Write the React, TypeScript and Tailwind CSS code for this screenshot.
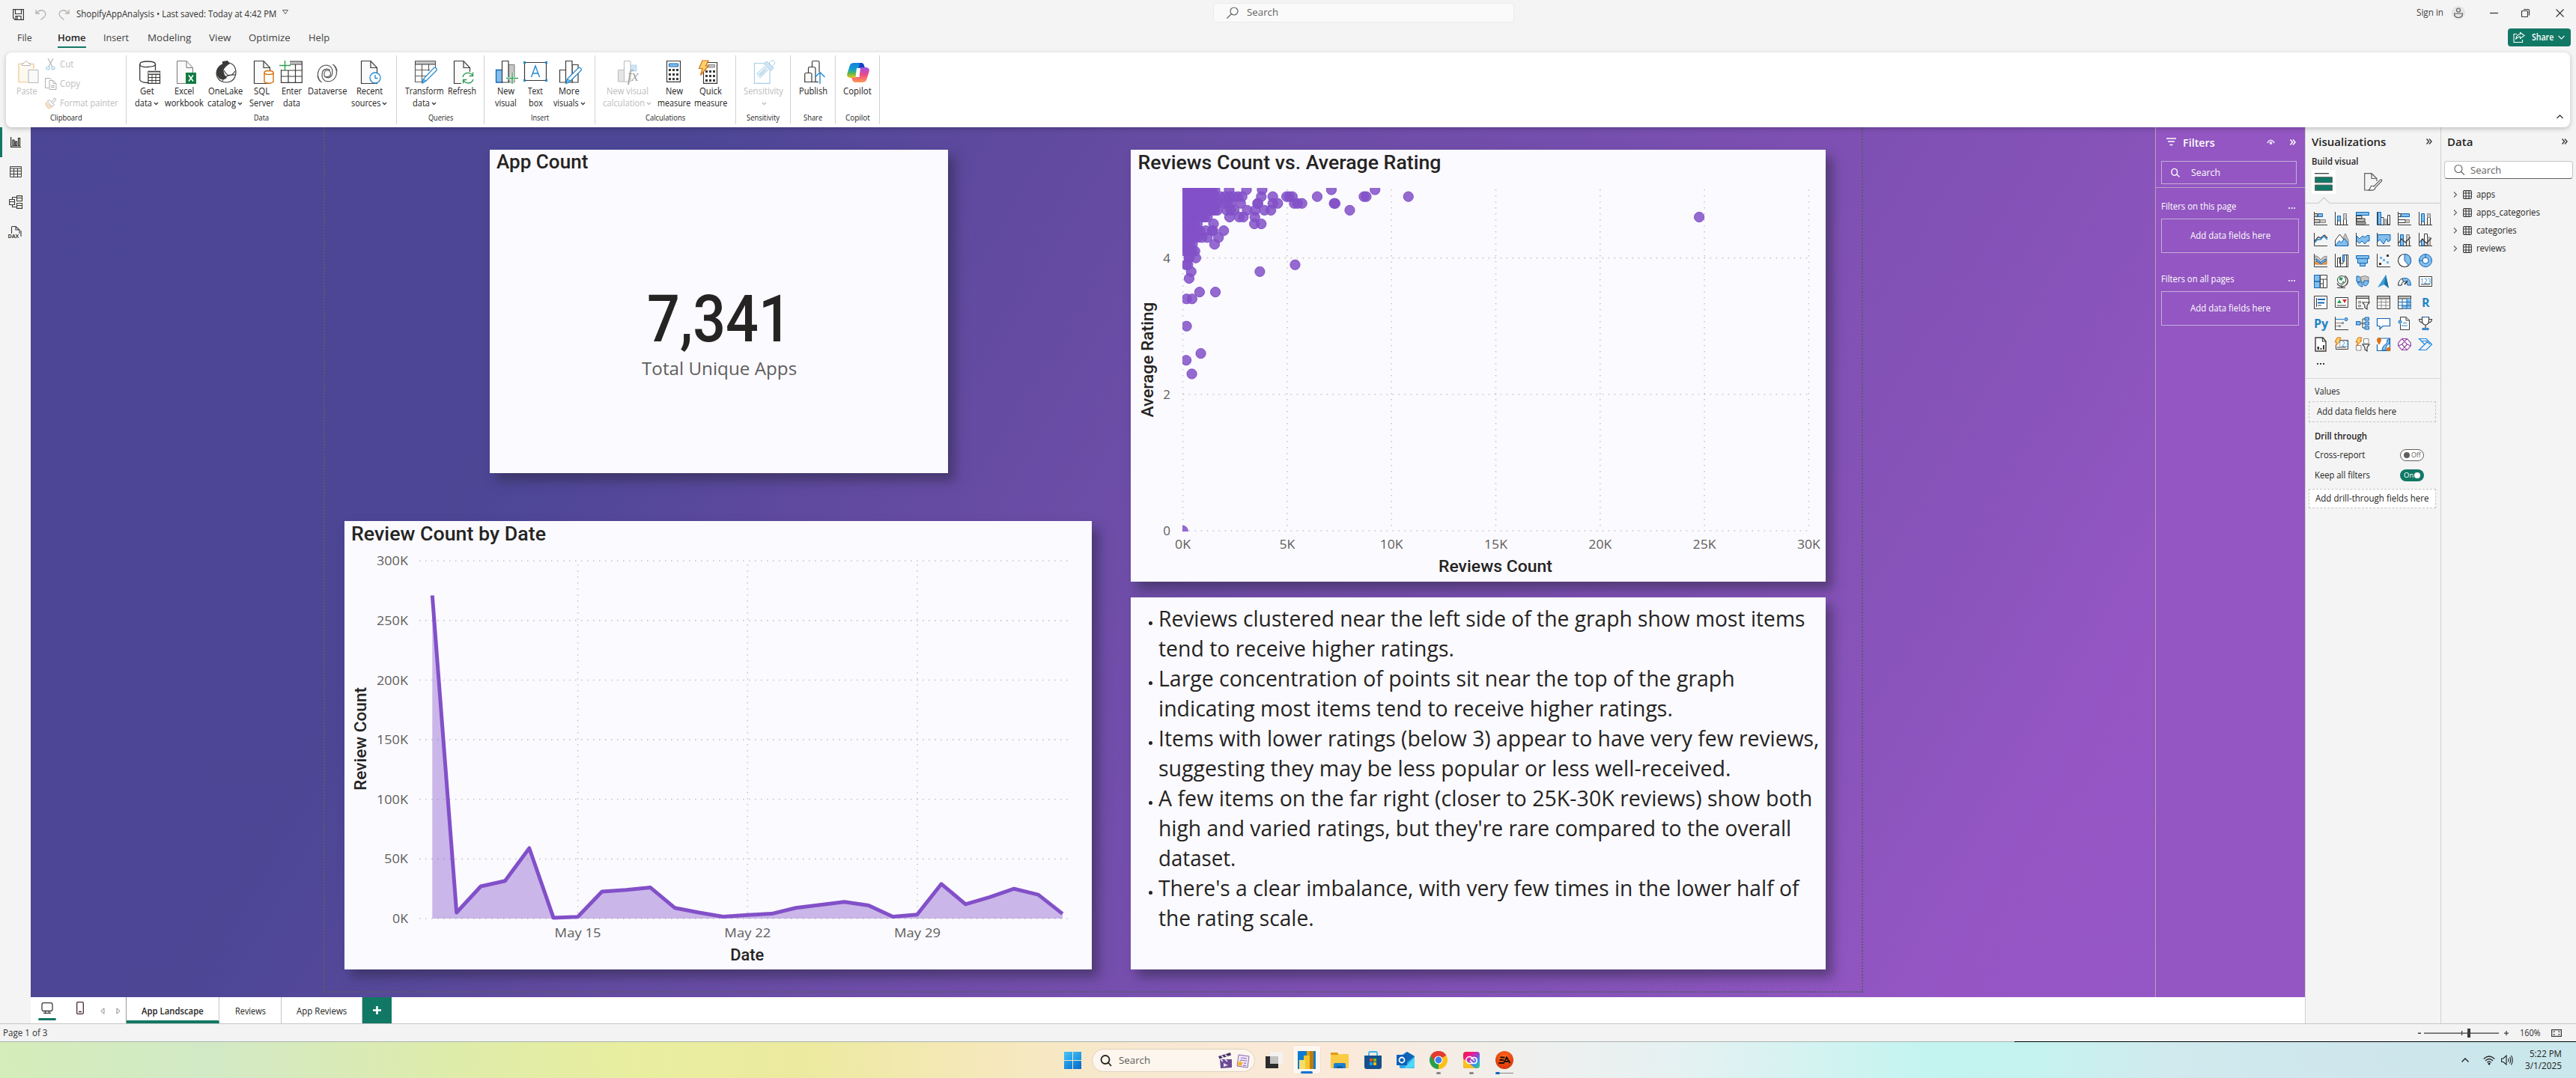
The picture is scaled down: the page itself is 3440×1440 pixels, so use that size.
import { useLayoutEffect, useRef, useState, type ReactNode } from "react";

/* ---------- text helpers ---------- */

function Fit({ w, children, className = "" }: { w: number; children: ReactNode; className?: string }) {
  const ref = useRef<HTMLSpanElement>(null);
  const [scale, setScale] = useState(1);
  useLayoutEffect(() => {
    if (ref.current && ref.current.offsetWidth) setScale(w / ref.current.offsetWidth);
  }, [w]);
  return (
    <span className={"inline-block shrink-0 text-left " + className} style={{ width: w }}>
      <span ref={ref} className="inline-block origin-left whitespace-nowrap" style={{ transform: `scaleX(${scale})` }}>
        {children}
      </span>
    </span>
  );
}

type Part = [d: string, fill?: string, stroke?: string, width?: number];

function Ico({ parts, w = 18, h = 18, className = "", children }: { parts: Part[]; w?: number; h?: number; className?: string; children?: ReactNode }) {
  return (
    <svg width={w} height={h} viewBox={`0 0 ${w} ${h}`} className={"block shrink-0 overflow-visible " + className}>
      {parts.map(([d, fill = "none", stroke = "none", sw = 1], i) => (
        <path key={i} d={d} fill={fill} stroke={stroke} strokeWidth={sw} />
      ))}
      {children}
    </svg>
  );
}

const K = "#3b3a39";
const B = "#1066b5";
const L = "#83beec";
const G = "#8a8886";
const S = "#c8c6c4";
const O = "#d86f0a";
const AX: Part = ["M.5 0V17.5H18", "none", K];

/* ---------- ribbon icons (30 x 32) ---------- */

const DOC = "M1.5 .5H14L22.500 9.500V30.500H1.500Z";
const rIcons: Record<string, ReactNode> = {
  paste: (
    <Ico w={28} h={30} parts={[["M7 4.500H1V28.500H14M21 11V4.500H15", "none", "#f2cf9f", 1.5], ["M2 5.500H20V28H2Z", "#fdf8f0"], ["M5.500 6.500V3.500H8Q11 -2 14 3.500H16.500V6.500Z", "#fff", "#b5b5b5"], ["M14 12.500H27V29.500H14Z", "#fafafa", "#b5b5b5"]]} />
  ),
  get: (
    <Ico w={28} h={31} className="ml-[3px]" parts={[["M.7 4V25Q.700 29 11 29.500H12M21.500 4V13", "none", K, 1.3], ["M1 4.500Q1 1 11 1T21.500 4.500T11 8.500T1 4.500Z", "#fafafa", K, 1.3], ["M12 14.500H27.500V30.300H12Z", "#fff", K, 1.3], ["M12 15H27.500V18H12Z", S], ["M12 18.500H27M12 22.500H27M12 26.500H27M17 18V30M22 18V30", "none", K]]} />
  ),
  excel: (
    <Ico w={28} h={31} className="ml-[3px]" parts={[[DOC, "#fafafa", "#797775"], ["M14 .500V9.500H22", "none", "#797775"], ["M13 16H27V31H13Z", "#107c41"], ["M17 19.500L23 27.500M23 19.500L17 27.500", "none", "#fff", 1.6]]} />
  ),
  onelake: (
    <Ico w={28} h={30} className="mr-[2px]" parts={[["M14 2.500Q27 3 27 16Q26 28.500 14 29Q2 28.500 1 17Q2 8 9 5", "#fafafa", K, 1.2], ["M9 1L16 0L19 4Q12 8 10.500 13Q11 19 15 23Q10 27 5 24Q-1 18 2 11Q5 6 9 5Z", K], ["M11 13Q18 26 26 14M9 27Q13 18 26 19", "none", K, 1.1]]} />
  ),
  sql: (
    <Ico w={28} h={31} className="ml-px" parts={[[DOC, "#fafafa", K, 1.2], ["M14 .500V9.500H22", "none", K, 1.2], ["M15 16V28.500Q21 32 27 28.500V16", "#fff", O, 1.4], ["M15 16Q15 13.500 21 13.500T27 16T21 18.500T15 16", "#fff", O, 1.4]]} />
  ),
  enter: (
    <Ico w={31} h={30} className="mr-[6px]" parts={[["M14 1H30V4.500H14Z", S], ["M14 1H30.300V29.300H2.500V12M14 5H30M2.500 13H30M2.500 21H30M12 13V29M21.500 5V29", "none", K, 1.2], ["M0 6.500H15M7.500 0V13.500", "none", "#2f9e56", 1.4]]} />
  ),
  dataverse: (
    <Ico w={28} h={26} className="mt-1 mr-1" parts={[["M5 24Q-1 16 3 8Q8 0 17 3Q23 7 20 16Q16 21 10 17", "none", "#605e5c", 1.3], ["M23 2Q29 10 25 18Q20 26 11 23Q5 19 8 10Q12 5 18 9", "none", "#605e5c", 1.3], ["M7 25Q2 23 1 16M21 1Q26 3 27 10M10 14Q10 9 14 9T18.500 13T14 17.500T10 14Z", "none", "#605e5c", 1.2]]} />
  ),
  recent: (
    <Ico w={28} h={31} parts={[[DOC, "#fafafa", K, 1.2], ["M14 .500V9.500H22", "none", K, 1.2], ["M27 23A7 7 0 1 1 13 23A7 7 0 1 1 27 23Z", "#fff", "#2389cf", 1.3], ["M20 19V23.500H23.500", "none", "#2389cf", 1.3]]} />
  ),
  transform: (
    <Ico w={31} h={31} parts={[["M.5 .500H27.500V5H.500Z", S, K], ["M.5 .500H27.500V14M.500 5V28.500H10M.500 12.500H20M.500 20.500H15M9.500 5V28.500M18.500 5V14", "none", "#605e5c", 1.2], ["M25.500 9.500Q29 9 29.500 12.500L15 27L10 30L11.500 24.500Z", "#fff", "#2389cf", 1.3], ["M11.500 24.500L15 27L10 30Z", "#83beec", "#2389cf"]]} />
  ),
  refresh: (
    <Ico w={28} h={31} parts={[[DOC, "#fafafa", K, 1.2], ["M14 .500V9.500H22", "none", K, 1.2], ["M11 15H28V31H11Z", "#fff"], ["M13 22A7 7 0 0 1 26 20M27 25A7 7 0 0 1 14 26M26.500 15.500V20.500H21.500M13.500 30.500V25.500H18.500", "none", "#2f9e56", 1.4]]} />
  ),
  newvisual: (
    <Ico w={30} h={31} parts={[["M.500 12.500H9V29H.500Z", L, B, 1.3], ["M17 5.500H25V29H17Z", S, "#797775"], ["M8.500 .500H17V29H8.500Z", "#fff", K, 1.2], ["M14 23.500H30M22 15.500V31", "none", "#fff", 3], ["M14 23.500H30M22 15.500V31", "none", "#2f9e56", 1.4]]} />
  ),
  textbox: (
    <Ico w={32} h={28} className="mt-px mr-1" parts={[["M1.500 1.500H30.500V25.500H1.500Z", "#fff", K, 1.2], ["M0 0H3V3H0ZM29 0H32V3H29ZM0 24H3V27H0ZM29 24H32V27H29Z", "#2389cf"], ["M10.500 21L16 6L21.500 21M12.500 16H19.500", "none", "#2389cf", 1.4]]} />
  ),
  more: (
    <Ico w={30} h={31} parts={[["M.500 12.500H9V29H.500Z", "#fff", K, 1.2], ["M17 5.500H25V29H17Z", "#fff", K, 1.2], ["M8.500 .500H17V29H8.500Z", "#fff", K, 1.2], ["M25.500 9.500Q29 9 29.500 12.500L15 27L9 30.500L10.500 24.500Z", "#fff", "#2389cf", 1.3], ["M10.500 24.500L15 27L9 30.500Z", L, "#2389cf"]]} />
  ),
  nvcalc: (
    <Ico w={29} h={31} parts={[["M.500 12.500H9V28H.500Z", "#e5e5e5", "#bcbcbc"], ["M17 6H25V14H17Z", "#cfe4f5", "#b9d8ef"], ["M8.500 .500H17V28H8.500Z", "#fff", "#bcbcbc"]]}>
      <text x="13" y="27" fontSize="20" fontStyle="italic" fill="#a0a0a0" fontFamily="Liberation Serif, serif">fx</text>
    </Ico>
  ),
  calc: (
    <Ico w={19} h={29} className="mr-[5px]" parts={[["M.500 .500H18.500V28.300H.500Z", "#fff", K, 1.2], ["M3.500 4H15.500V8H3.500Z", L, B], ["M3 11H6V14H3ZM8 11H11V14H8ZM13 11H16V14H13ZM3 17H6V20H3ZM8 17H11V20H8ZM13 17H16V20H13ZM3 23H6V26H3ZM8 23H11V26H8ZM13 23H16V26H13Z", K]]} />
  ),
  quick: (
    <Ico w={25} h={31} className="mr-[11px]" parts={[["M6.500 2.500H24.500V30.300H6.500Z", "#fff", K, 1.2], ["M12 5.500H21.500V9H12Z", S, G], ["M9 13H12V16H9ZM14 13H17V16H14ZM19 13H22V16H19ZM9 19H12V22H9ZM14 19H17V22H14ZM19 19H22V22H19ZM9 25H12V28H9ZM14 25H17V28H14ZM19 25H22V28H19Z", K], ["M5 0H13L9.500 7H13L2.500 19.500L5 10.500H.500Z", "#fbd26f", O, 1.2]]} />
  ),
  sens: (
    <Ico w={28} h={31} parts={[["M14 3.500H.500V30.300H21V14", "none", "#a9cfe8", 1.2], ["M4 17L14 8L18 13L8 23Z", "#eef6fb", "#a9cfe8"], ["M7 18L14 11.500L15.500 13.500L9 20Z", "#cfe4f2", "#a9cfe8"], ["M13 4L17 1L26 10L22 14Z", "#cfe4f2", "#a9cfe8"], ["M20 3L25 -1L28 3L24 8Z", "#fff", "#a9cfe8"]]} />
  ),
  publish: (
    <Ico w={28} h={31} parts={[["M.700 28.500V18Q.700 16.500 2.500 16.500H8Q10 16.500 10 18V28.500Z", "#fafafa", K, 1.2], ["M5.500 16V10Q5.500 8.500 7 8.500H12Q15 8.500 15 10.500V28.500H10", "none", K, 1.2], ["M10.500 8V2Q10.500 .500 12 .500H18Q20 .500 20 2V15", "none", K, 1.2], ["M15 28.500H19", "none", K, 1.2], ["M21 31V16M14.500 22L21 15.500L27.500 22", "none", "#2389cf", 1.4]]} />
  ),
  copilot: (
    <svg width="30" height="28" viewBox="0 0 30 28" className="mt-0.5 mr-[3px] block">
      <defs>
        <linearGradient id="cpa" x1="0" y1="0" x2="0" y2="1"><stop offset="0" stopColor="#1a7fe0" /><stop offset=".45" stopColor="#12a0c8" /><stop offset=".7" stopColor="#5fb84a" /><stop offset="1" stopColor="#f0c020" /></linearGradient>
        <linearGradient id="cpb" x1="0" y1="0" x2="0" y2="1"><stop offset="0" stopColor="#a050e8" /><stop offset=".5" stopColor="#ee4a86" /><stop offset="1" stopColor="#ff9a50" /></linearGradient>
      </defs>
      <path d="M9 1H19Q22 1 23 5L24 8H19L13 20Q12 21 9 21H4Q-1 20 .5 15L4 4Q5.500 1 9 1Z" fill="url(#cpa)" />
      <path d="M17 1H19Q22 1 23 5L24 8H16Z" fill="#1640c4" />
      <path d="M21 27H11Q8 27 7 23L6 21H11L17 8Q18 7 21 7H26Q31 8 29.500 13L26 24Q24.500 27 21 27Z" fill="url(#cpb)" />
      <path d="M13 8H18L16.500 20H11.500Z" fill="#fff" />
    </svg>
  ),
};

function Caret({ color = "#3b3a39" }: { color?: string }) {
  return (
    <svg width="7" height="5" viewBox="0 0 7 5" className="ml-0.5 block shrink-0">
      <path d="M1 1L3.500 3.500L6 1" fill="none" stroke={color} strokeWidth="1.300" />
    </svg>
  );
}

type Btn = { icon: string; box: string; a: string; aw: number; b?: string; bw?: number; caret?: boolean; off?: boolean };

function RibbonButton({ icon, box, a, aw, b, bw = 0, caret, off }: Btn) {
  return (
    <div className={"flex shrink-0 flex-col items-center text-[12px] leading-4 " + box + (off ? " text-[#bdbdbd]" : " text-[#252423]")}>
      <div className="flex h-[33px] justify-center pl-1">{rIcons[icon]}</div>
      <div className="flex h-4 justify-center"><Fit w={aw}>{a}</Fit></div>
      <div className="flex h-4 items-center justify-center">
        {b && <Fit w={bw}>{b}</Fit>}
        {caret && <Caret color={off ? "#bdbdbd" : "#3b3a39"} />}
      </div>
    </div>
  );
}

function Group({ box, label, lw, children, pad = "" }: { box: string; label: string; lw: number; children: ReactNode; pad?: string }) {
  return (
    <div className={"relative my-1 flex h-[92px] shrink-0 flex-col border-r border-[#d1d1d1] pt-[7px] " + box}>
      <div className={"flex h-[69px] " + pad}>{children}</div>
      <div className="flex justify-center text-[10.500px] leading-[14px] text-[#252423]"><Fit w={lw}>{label}</Fit></div>
    </div>
  );
}

const dataButtons: Btn[] = [
  { icon: "get", box: "w-[44px]", a: "Get", aw: 19, b: "data", bw: 23, caret: true },
  { icon: "excel", box: "w-[55px]", a: "Excel", aw: 26, b: "workbook", bw: 52 },
  { icon: "onelake", box: "w-[55px]", a: "OneLake", aw: 46, b: "catalog", bw: 38, caret: true },
  { icon: "sql", box: "w-[42px]", a: "SQL", aw: 21, b: "Server", bw: 33 },
  { icon: "enter", box: "w-[38px]", a: "Enter", aw: 27, b: "data", bw: 23 },
  { icon: "dataverse", box: "w-[58px]", a: "Dataverse", aw: 52 },
  { icon: "recent", box: "w-[54px]", a: "Recent", aw: 35, b: "sources", bw: 39, caret: true },
];

function Header() {
  return (
    <header className="h-[170px] bg-[#f4f4f4]">
      <div className="flex h-[34px] items-start justify-between">
        <div className="flex h-[34px] w-[1620px] items-center pt-1 pl-[17px] text-[12px] text-[#323130]">
          <Ico w={15} h={15} parts={[["M.600 .600H14.400V14.400H3L.600 12Z", "none", K, 1.2], ["M3.500 1V6.500H11.500V1M4 14V9.500H11V14M6 10V14", "none", K, 1.2]]} />
          <Ico w={15} h={15} className="ml-[15px]" parts={[["M1 1V6H6M1.500 5.500Q7 -.500 12 3Q16 7 11.500 11L7.500 14.500", "none", "#b5b3b1", 1.3]]} />
          <Ico w={15} h={15} className="ml-[16px]" parts={[["M14 1V6H9M13.500 5.500Q8 -.500 3 3Q-1 7 3.500 11L7.500 14.500", "none", "#b5b3b1", 1.3]]} />
          <Fit w={267} className="ml-[9px]">ShopifyAppAnalysis • Last saved: Today at 4:42 PM</Fit>
          <Ico w={8} h={7} className="-mt-1.5 ml-[8px]" parts={[["M.500 .500H7.500L4 5.500Z", "none", "#605e5c"]]} />
        </div>
        <div className="mt-1 flex h-[26px] w-[402px] items-center rounded border border-[#ebebeb] bg-[#fafafa] pl-[17px] text-[13px] text-[#616161]">
          <Ico w={16} h={16} parts={[["M15 6A5 5 0 1 1 5 6A5 5 0 1 1 15 6ZM6.500 9.500L.500 15.500", "none", "#616161", 1.2]]} />
          <Fit w={42} className="ml-[11px]">Search</Fit>
        </div>
        <div className="flex h-[34px] w-[1418px] items-center justify-end pr-[16px] text-[12px] text-[#424242]">
          <Fit w={36}>Sign in</Fit>
          <div className="ml-[11px] flex size-[18px] items-center justify-center rounded-full bg-[#e4e4e4]">
            <Ico w={14} h={14} parts={[["M9.500 3.500A2.500 2.500 0 1 1 4.500 3.500A2.500 2.500 0 1 1 9.500 3.500ZM1.500 8H12.500Q12.500 13.500 7 13.500T1.500 8Z", "none", "#605e5c", 1.2]]} />
          </div>
          <Ico w={11} h={11} className="ml-[33px]" parts={[["M0 5.500H11", "none", K, 1.3]]} />
          <Ico w={11} h={11} className="ml-[31px]" parts={[["M.500 3.500Q.500 2.500 1.500 2.500H7.500Q8.500 2.500 8.500 3.500V9.500Q8.500 10.500 7.500 10.500H1.500Q.500 10.500 .500 9.500ZM3 .500H9Q10.500 .500 10.500 2V8.500", "none", K, 1.2]]} />
          <Ico w={11} h={11} className="ml-[35px]" parts={[["M.500 .500L10.500 10.500M10.500 .500L.500 10.500", "none", K, 1.2]]} />
        </div>
      </div>
      <div className="flex h-[36px] items-start justify-between text-[13px] leading-[18px] text-[#424242]">
        <nav className="flex h-[30px] pt-[7px] pl-[23px]">
          <Fit w={20}>File</Fit>
          <div className="ml-[34px] h-[23px] border-b-2 border-[#117865] font-semibold text-[#242424]"><Fit w={38}>Home</Fit></div>
          <Fit w={34} className="ml-[23px]">Insert</Fit>
          <Fit w={58} className="ml-[25px]">Modeling</Fit>
          <Fit w={29} className="ml-[24px]">View</Fit>
          <Fit w={56} className="ml-[24px]">Optimize</Fit>
          <Fit w={28} className="ml-[24px]">Help</Fit>
        </nav>
        <div className="mt-1 mr-[7px] flex h-[24px] w-[84px] items-center rounded bg-[#117865] pl-[7px] text-[12px] font-semibold text-white">
          <Ico w={16} h={14} parts={[["M5 2.500H1V13.500H12.500V10M9.500 .500L15 4.500L9.500 8.500V6Q6 6 3.500 9.500Q4.500 3 9.500 2.800Z", "none", "#fff", 1.1]]} />
          <Fit w={29} className="ml-[9px]">Share</Fit>
          <Ico w={9} h={6} className="ml-[6px]" parts={[["M.500 .800L4.500 4.800L8.500 .800", "none", "#fff", 1.2]]} />
        </div>
      </div>
      <div className="relative z-10 mx-2 flex h-[100px] justify-between rounded-lg bg-white shadow-[0_2px_6px_rgba(0,0,0,0.220)]">
        <div className="flex">
          <Group box="w-[161px]" label="Clipboard" lw={43} pad="pl-[14px]">
            <div className="flex w-[28px] flex-col items-center text-[12px] leading-4 text-[#bdbdbd]">
              <div className="h-[33px] pl-1">{rIcons.paste}</div>
              <Fit w={28}>Paste</Fit>
            </div>
            <div className="-mt-2 ml-[10px] flex flex-col text-[12px] leading-[26px] text-[#bdbdbd]">
              <div className="flex h-[26px] items-center">
                <Ico w={15} h={16} className="mr-[5px]" parts={[["M4 0L10 11M11 0L5 11", "none", "#b0b0b0", 1.1], ["M6 13A2 2 0 1 1 2 13A2 2 0 1 1 6 13ZM13 13A2 2 0 1 1 9 13A2 2 0 1 1 13 13Z", "none", "#9fcbe6", 1.2]]} />
                <Fit w={18}>Cut</Fit>
              </div>
              <div className="flex h-[26px] items-center">
                <Ico w={15} h={16} className="mr-[5px]" parts={[["M5 13.500H.500V.500H7L9 2.500", "none", "#b0b0b0"], ["M6 3.500H11L15 7.500V15.500H6ZM11 3.500V7.500H15M8 10.500H13M8 12.500H13", "#fff", "#b0b0b0"]]} />
                <Fit w={27}>Copy</Fit>
              </div>
              <div className="flex h-[26px] items-center">
                <Ico w={15} h={16} className="mr-[5px]" parts={[["M1 7L9 13L6 15Q1 14 1 7Z", "#fae3cb", "#eac29a"], ["M3 5.500L10 12.500L12.500 10L6 3.500ZM9 6L13 .800L15 3L10.500 8", "#fff", "#b0b0b0"]]} />
                <Fit w={78}>Format painter</Fit>
              </div>
            </div>
          </Group>
          <Group box="w-[361px]" label="Data" lw={20} pad="pl-[5px]">
            {dataButtons.map((b) => <RibbonButton key={b.a} {...b} />)}
          </Group>
          <Group box="w-[117px]" label="Queries" lw={33} pad="pl-[9px]">
            <RibbonButton icon="transform" box="w-[56px]" a="Transform" aw={52} b="data" bw={23} caret />
            <RibbonButton icon="refresh" box="w-[44px]" a="Refresh" aw={38} />
          </Group>
          <Group box="w-[148px]" label="Insert" lw={24} pad="pl-[8px]">
            <RibbonButton icon="newvisual" box="w-[40px]" a="New" aw={23} b="visual" bw={29} />
            <RibbonButton icon="textbox" box="w-[40px]" a="Text" aw={20} b="box" bw={19} />
            <RibbonButton icon="more" box="w-[50px]" a="More" aw={28} b="visuals" bw={34} caret />
          </Group>
          <Group box="w-[188px]" label="Calculations" lw={53} pad="pl-[8px]">
            <RibbonButton icon="nvcalc" box="w-[69px]" a="New visual" aw={56} b="calculation" bw={56} caret off />
            <RibbonButton icon="calc" box="w-[56px]" a="New" aw={23} b="measure" bw={44} />
            <RibbonButton icon="quick" box="w-[42px]" a="Quick" aw={30} b="measure" bw={44} />
          </Group>
          <Group box="w-[73px]" label="Sensitivity" lw={44}>
            <RibbonButton icon="sens" box="w-[72px]" a="Sensitivity" aw={53} caret off />
          </Group>
          <Group box="w-[60px]" label="Share" lw={25}>
            <RibbonButton icon="publish" box="w-[59px]" a="Publish" aw={38} />
          </Group>
          <Group box="w-[59px]" label="Copilot" lw={33}>
            <RibbonButton icon="copilot" box="w-[58px]" a="Copilot" aw={38} />
          </Group>
        </div>
        <Ico w={9} h={6} className="mt-[83px] mr-[9px]" parts={[["M.500 5L4.500 1L8.500 5", "none", K, 1.4]]} />
      </div>
    </header>
  );
}

/* ---------- report visuals ---------- */

const DIN = "Roboto, 'Liberation Sans', sans-serif";
const SEG = "'Open Sans', 'Noto Sans', sans-serif";
const PURPLE = "#8250c8";

function CountCard() {
  return (
    <section className="ml-[194px] mt-[30px] flex h-[432px] w-[612px] flex-col items-center bg-[#fbfaff] shadow-[9px_10px_14px_rgba(45,40,70,0.550)]">
      <h2 className="w-full pt-px pl-[9px] font-[Roboto] text-[25px] leading-[32px] font-medium text-[#252423]"><Fit w={122}>App Count</Fit></h2>
      <div className="mt-[138px] font-[Roboto] text-[88px] leading-[110px] font-medium text-[#252423]"><Fit w={193}>7,341</Fit></div>
      <div className="-mt-[5px] text-[24px] leading-[32px] text-[#605e5c]"><Fit w={207}>Total Unique Apps</Fit></div>
    </section>
  );
}

const reviewsByDay = [271, 5, 27, 31.5, 59, 0.7, 1.4, 22.6, 24, 26, 9, 5, 1.6, 3, 4, 9, 11.5, 14, 11, 1.6, 3.3, 29, 12, 18, 25, 20, 4];

function ReviewsByDate() {
  const y = (v: number) => 531 - v * 1.5925;
  const pts = reviewsByDay.map((v, i) => `${(117.3 + i * 32.37).toFixed(1)},${y(v).toFixed(1)}`);
  return (
    <section className="mt-[64px] h-[599px] w-[998px] bg-[#fbfaff] shadow-[9px_10px_14px_rgba(45,40,70,0.550)]">
      <svg width="998" height="599" className="block">
        <text x="9" y="26" fontSize="25" fontWeight="500" fontFamily={DIN} fill="#252423" textLength="260" lengthAdjust="spacingAndGlyphs">Review Count by Date</text>
        {[0, 50, 100, 150, 200, 250, 300].map((v) => (
          <g key={v}>
            <line x1="100" x2="968" y1={y(v)} y2={y(v)} stroke="#c8c6c4" strokeWidth="1.600" strokeDasharray="1.600 6.400" />
            <text x="85" y={y(v) + 6} fontSize="17" fontFamily={SEG} fill="#605e5c" textAnchor="end" textLength={v === 0 ? 21 : v === 50 ? 32 : 42} lengthAdjust="spacingAndGlyphs">{v}K</text>
          </g>
        ))}
        {["May 15", "May 22", "May 29"].map((t, i) => (
          <g key={t}>
            <line x1={311.6 + i * 226.7} x2={311.6 + i * 226.7} y1="58" y2="531" stroke="#c8c6c4" strokeWidth="1.600" strokeDasharray="1.600 6.400" />
            <text x={311.6 + i * 226.7} y="555.500" fontSize="17" fontFamily={SEG} fill="#605e5c" textAnchor="middle" textLength="62" lengthAdjust="spacingAndGlyphs">{t}</text>
          </g>
        ))}
        <polygon points={`117.3,531 ${pts.join(" ")} 959,531`} fill={PURPLE} fillOpacity="0.4" />
        <polyline points={pts.join(" ")} fill="none" stroke={PURPLE} strokeWidth="5" strokeLinejoin="round" />
        <text x="537.700" y="587" fontSize="22" fontWeight="500" fontFamily={DIN} fill="#252423" textAnchor="middle" textLength="45" lengthAdjust="spacingAndGlyphs">Date</text>
        <text transform="translate(29 291) rotate(-90)" fontSize="22" fontWeight="500" fontFamily={DIN} fill="#252423" textAnchor="middle" textLength="138" lengthAdjust="spacingAndGlyphs">Review Count</text>
      </svg>
    </section>
  );
}

/* rating -> review counts in thousands, with the densely packed range given as its upper bound */
const ratings: [rating: number, dense: number, singles: number[]][] = [
  [5, 1.6, [2.22, 3.05, 3.8, 7.12, 9.21]],
  [4.9, 1.65, [1.8, 2.02, 2.24, 2.42, 2.64, 2.84, 3.76, 4.31, 4.97, 5.1, 5.25, 6.44, 8.68, 8.79, 10.81]],
  [4.8, 1.75, [2.0, 2.15, 2.29, 2.77, 3.58, 3.6, 4.31, 4.55, 5.34, 5.5, 5.71, 7.25, 7.3]],
  [4.7, 1.69, [2.1, 2.3, 2.46, 3.08, 3.47, 3.91, 4.22, 8.0]],
  [4.6, 1.27, [2.24, 2.7, 2.9, 3.45, 24.75]],
  [4.5, 0.8, [1.47, 3.43, 3.76]],
  [4.4, 0.9, [1.1, 1.41, 1.44, 1.96]],
  [4.3, 0.75, [0.92, 1.17, 1.71]],
  [4.2, 0.55, [1.52]],
  [4.1, 0.6, []],
  [4, 0, [0.3, 0.29, 0.62]],
  [3.9, 0, [0.15, 0.24, 5.38]],
  [3.8, 0, [0.4, 3.69]],
  [3.7, 0, [0.3]],
  [3.5, 0, [0.8, 1.56]],
  [3.4, 0, [0.18, 0.44]],
  [3, 0, [0.18]],
  [2.6, 0, [0.86]],
  [2.5, 0, [0.16]],
  [2.3, 0, [0.43]],
  [0, 0, [0.0]],
];

function RatingScatter() {
  const px = (k: number) => 69.6 + k * 27.86;
  const py = (r: number) => 509 - r * 91.1;
  const dots = ratings.flatMap(([r, dense, singles]) => {
    const list = [...singles];
    for (let k = 0.1; k <= dense; k += 0.12) list.push(k);
    return list.map((k) => [px(k), py(r)]);
  });
  return (
    <section className="mt-[30px] h-[577px] w-[928px] bg-[#fbfaff] shadow-[9px_10px_14px_rgba(45,40,70,0.550)]">
      <svg width="928" height="577" className="block">
        <defs><clipPath id="plot"><rect x="69" y="51" width="840" height="459" /></clipPath></defs>
        <text x="9.500" y="26" fontSize="25" fontWeight="500" fontFamily={DIN} fill="#252423" textLength="405" lengthAdjust="spacingAndGlyphs">Reviews Count vs. Average Rating</text>
        {[0, 2, 4].map((r) => (
          <g key={r}>
            <line x1="69.600" x2="905.500" y1={py(r)} y2={py(r)} stroke="#c8c6c4" strokeWidth="1.600" strokeDasharray="1.600 6.400" />
            <text x="53" y={py(r) + 6} fontSize="17" fontFamily={SEG} fill="#605e5c" textAnchor="end">{r}</text>
          </g>
        ))}
        {[0, 5, 10, 15, 20, 25, 30].map((k) => (
          <g key={k}>
            <line x1={px(k)} x2={px(k)} y1="53" y2="509" stroke="#c8c6c4" strokeWidth="1.600" strokeDasharray="1.600 6.400" />
            <text x={px(k)} y="533" fontSize="17" fontFamily={SEG} fill="#605e5c" textAnchor="middle" textLength={k < 10 ? 21 : 31} lengthAdjust="spacingAndGlyphs">{k}K</text>
          </g>
        ))}
        <g clipPath="url(#plot)" fill={PURPLE} fillOpacity="0.85" stroke={PURPLE} strokeWidth="1">
          {dots.map(([x, y], i) => <circle key={i} cx={x} cy={y} r="6.600" />)}
        </g>
        <text x="487" y="564" fontSize="22" fontWeight="500" fontFamily={DIN} fill="#252423" textAnchor="middle" textLength="152" lengthAdjust="spacingAndGlyphs">Reviews Count</text>
        <text transform="translate(30 280.500) rotate(-90)" fontSize="22" fontWeight="500" fontFamily={DIN} fill="#252423" textAnchor="middle" textLength="154" lengthAdjust="spacingAndGlyphs">Average Rating</text>
      </svg>
    </section>
  );
}

const notes: [string, number][][] = [
  [["Reviews clustered near the left side of the graph show most items", 864], ["tend to receive higher ratings.", 395]],
  [["Large concentration of points sit near the top of the graph", 770], ["indicating most items tend to receive higher ratings.", 687]],
  [["Items with lower ratings (below 3) appear to have very few reviews,", 882], ["suggesting they may be less popular or less well-received.", 764]],
  [["A few items on the far right (closer to 25K-30K reviews) show both", 873], ["high and varied ratings, but they're rare compared to the overall", 845], ["dataset.", 103]],
  [["There's a clear imbalance, with very few times in the lower half of", 856], ["the rating scale.", 208]],
];

function Notes() {
  return (
    <section className="mt-[21px] h-[497px] w-[928px] bg-[#fbfaff] pt-[8px] pl-[24px] text-[29px] leading-[40px] text-[#252423] shadow-[9px_10px_14px_rgba(45,40,70,0.550)]">
      {notes.map((lines) => (
        <div key={lines[0][0]} className="flex">
          <span className="mt-[24px] mr-[8px] size-[5px] shrink-0 rounded-full bg-[#252423]" />
          <div className="flex flex-col">
            {lines.map(([t, w]) => <Fit key={t} w={w} className="h-[40px]">{t}</Fit>)}
          </div>
        </div>
      ))}
    </section>
  );
}

function Canvas() {
  return (
    <main className="flex h-[1162px] w-[2837px] overflow-hidden bg-[linear-gradient(120deg,#4b4695_0%,#4c4695_25%,#654ba2_42%,#6d4da8_50%,#7e50b3_69%,#8653b9_80%,#9556c4_92%,#9657c6_100%)]">
      <div className="ml-[391px] flex h-[1156px] w-[2056px] border-x-2 border-b-2 border-dotted border-[#5c5a70] pl-[26px]">
        <div className="w-[998px]">
          <CountCard />
          <ReviewsByDate />
        </div>
        <div className="ml-[52px] w-[928px]">
          <RatingScatter />
          <Notes />
        </div>
      </div>
    </main>
  );
}

/* ---------- side panes ---------- */

function Chevrons({ color = "#424242" }: { color?: string }) {
  return <Ico w={8} h={8} parts={[["M.500 .500L3.500 4L.500 7.500M4 .500L7 4L4 7.500", "none", color, 1.5]]} />;
}

function FilterGroup({ title, w, top }: { title: string; w: number; top: string }) {
  return (
    <div className={top}>
      <div className="flex h-[16px] items-center justify-between pr-[13px]">
        <Fit w={w}>{title}</Fit>
        <Ico w={9} h={2} className="mt-1" parts={[["M0 0H2V2H0ZM3.500 0H5.500V2H3.500ZM7 0H9V2H7Z", "#e8dcf2"]]} />
      </div>
      <div className="mt-[8px] flex h-[46px] w-[184px] items-center justify-center border border-[#c5aedb]"><Fit w={107}>Add data fields here</Fit></div>
    </div>
  );
}

function Filters() {
  return (
    <aside className="h-[1162px] w-[200px] border-l border-[#b3a3ba] bg-[#9356c2] text-[12px] leading-4 text-white">
      <div className="flex h-[39px] items-center pl-[14px]">
        <Ico w={13} h={11} parts={[["M0 1H13M2 5H11M4.500 9.500H8.500", "none", "#fff", 1.7]]} />
        <Fit w={43} className="ml-[9px] text-[15px] font-semibold">Filters</Fit>
        <Ico w={11} h={8} className="ml-[69px]" parts={[["M.700 5Q5.500 -2.500 10.300 5", "none", "#eadcf5", 1.6], ["M7.500 5A2 2 0 1 1 3.500 5A2 2 0 1 1 7.500 5Z", "#eadcf5"]]} />
        <div className="ml-[20px]"><Chevrons color="#fff" /></div>
      </div>
      <div className="border-b border-[#b9a2cb] pt-[6px] pb-[4px] pl-[7px]">
        <div className="flex h-[31px] w-[181px] items-center border border-[#c5aedb] pl-[12px]">
          <Ico w={12} h={12} parts={[["M8.500 4.800A3.800 3.800 0 1 1 1 4.800A3.800 3.800 0 1 1 8.500 4.800ZM7.500 7.500L11.500 11.500", "none", "#fff", 1.4]]} />
          <Fit w={39} className="ml-[15px]">Search</Fit>
        </div>
      </div>
      <div className="pl-[7px]">
        <FilterGroup title="Filters on this page" w={100} top="mt-[17px]" />
        <FilterGroup title="Filters on all pages" w={98} top="mt-[27px]" />
      </div>
    </aside>
  );
}

const vizIcons: Part[][] = [
  [AX, ["M.500 4.500H5M.500 12.500H8", "none", G], ["M5.500 2.500H11.500V6.500H5.500Z", L, B], ["M1 2.500H5V6.500H1M1 10.500H8V14.500H1", "none", K], ["M8.500 10.500H15.500V14.500H8.500Z", S, G]],
  [AX, ["M3.500 5.500H7.500V12H3.500Z", L, B], ["M3.500 12V17M7.500 12V17M11.500 10V17M15.500 10V17", "none", K], ["M11.500 2.500H15.500V9.500H11.500Z", S, G]],
  [AX, ["M.500 .500H17.500V4.500H.500Z", L, B], ["M1 5.500H8V8.500H1M1 14H13V16H1", "#fff", K], ["M1 9H12V13H1Z", S, K]],
  [AX, ["M1.500 .500H5.500V17H1.500Z", L, B], ["M6 7.500H9V17M14.500 4.500H17.500V17H14.500Z", "#fff", K], ["M10 10H13.500V17H10Z", S, G]],
  [AX, ["M4.500 2.500H15.500V6.500H4.500Z", L, B], ["M1 2.500H4V6.500H1M1 10.500H10V14.500H1", "none", K], ["M10.500 10.500H15.500V14.500H10.500Z", S, G]],
  [AX, ["M3.500 2.500H7.500V13H3.500Z", L, B], ["M3.500 13V17M7.500 13V17M11.500 8V17M15.500 8V17", "none", K], ["M11.500 2.500H15.500V7.500H11.500Z", S, G]],
  [AX, ["M1 11L6 5.500L9 7L14 3L18 7", "none", K, 1.3], ["M1 13L5 9L9 9L13 4.500L18 9", "none", "#2389cf", 1.3]],
  [["M10 9L14 1L18 10V17H13Z", S, G], ["M.500 10L6.500 2L12 9L7 17H.500Z", "#fff", K], ["M.500 17.500L6 10.500L8.500 13L13 7.500L17.500 14V17.500Z", L, B]],
  [AX, ["M1 4L5 8L9 4L12 6L15 3.500H18V11L15 11L12 15L8 11L5 14L1 11Z", L, B]],
  [AX, ["M1 2.500H18V10L15 12L13 8L9 15L4 9L1 12Z", L, B]],
  [AX, ["M3.500 2.500H7.500V17H3.500Z", L, B], ["M11.500 2.500H15.500V9.500H11.500Z", S, G], ["M11.500 10V17M15.500 10V17M1 14L5 8L10 13L17 6", "none", K, 1.2]],
  [AX, ["M3.500 9.500H7.500V17H3.500Z", L, B], ["M7.500 1.500H11.500V17H7.500Z", "#fff", K], ["M12 6H15.500V17H12Z", S, G], ["M1 13L5 8L10 14L17 7", "none", K, 1.2]],
  [AX, ["M2 2.500Q6 3 9 8Q12 3 17 3V8Q13 8 10 12Q6 8 2 8Z", S, G], ["M2 10Q6 8 9 13Q13 8 17 8V14H2Z", "#f0a04a", O], ["M3 7Q6 8 9 12Q12 8 16 7V10Q13 10 10 14Q6 11 3 10Z", L, B]],
  [AX, ["M3.500 6V17M7.500 4V17M3 5.500H6.500V13H11V5.500M15.500 1.500V17M12 1.500H17.500V17M12 1V11", "none", K], ["M10.500 1.500H12.500V9.500H10.500Z", L, B]],
  [["M.500 2.500H17.500V6.500H.500ZM2.500 6.500H15.500V12.500H2.500ZM5.500 12.500H12.500V16.500H5.500Z", L, B]],
  [AX, ["M4 4H7V7H4ZM8 7H11V10H8ZM13 10H16V13H13Z", "#6fb5ec"], ["M13 1H16V4H13ZM3 12H6V15H3Z", K]],
  [["M17.500 9A8.500 8.500 0 1 1 .500 9A8.500 8.500 0 1 1 17.500 9Z", "#fff", K, 1.2], ["M9 .500A8.500 8.500 0 0 1 14.500 15.500L9 9Z", L, B]],
  [["M17.500 9A8.500 8.500 0 1 1 .500 9A8.500 8.500 0 1 1 17.500 9Z", L, B], ["M9 .500V5M.500 9H5", "none", B], ["M13 9A4 4 0 1 1 5 9A4 4 0 1 1 13 9Z", "#fff", B]],
  [["M.500 .500H8V9H.500ZM.500 9H8V17.500H.500Z", L, B], ["M8.500 .500H17.500V17.500H8.500ZM8.500 6H17.500M12.500 6V17.500M8.500 12H12.500", "#fff", K]],
  [["M14.500 7A5.500 5.500 0 1 1 3.500 7A5.500 5.500 0 1 1 14.500 7Z", "#fff", K], ["M6 3L11 4L9 8L6 7ZM11 8L13 10L9 12Z", "#2f9e56"], ["M13 1.500A7.500 7.500 0 1 1 3 11.500M9 14V17M3 17.500H14", "none", K, 1.2]],
  [["M1 2Q5 1 6 4L7 8Q4 11 1 9Z", L, B], ["M6 3Q12 0 17 3V9Q13 8 8 11Z", S, G], ["M11 8L17 8Q17 14 12 15L10 13ZM2 10H8L9 16Q4 16 2 10Z", L, B]],
  [["M12 0L16 18L10 13L1 17Z", "#3c9fd6"], ["M12 0L16 18L10 13Z", "#1a6fa8"]],
  [["M.500 14Q1 5 9 4.500T17.500 14H13Q13 9 9 9T5 14Z", L, B], ["M.500 14Q1 7 6 5L7.500 9.500Q5 10 5 14Z", "#fff", K], ["M9 13L13 8", "none", K, 2]],
  [["M.500 2.500H17.500V15.500H.500ZM3 13H15", "#fff", K]],
  [["M.500 .500H17.500V17.500H.500Z", "#fff", K], ["M3.500 3V15M5 9.500H14M5 13H10", "none", K], ["M5 5H15M5 9.500H14", "none", B, 2]],
  [["M.500 2.500H17.500V15.500H.500ZM3 13H15", "#fff", K], ["M3 10L6 5L9 10Z", "#2f9e56"], ["M10 5H16L13 10Z", "#d13438"]],
  [["M.500 .500H17.500V9M.500 .500V17.500H10", "#fff", K], ["M.500 .500H17.500V3.500H.500Z", S, K], ["M3.500 7.500H6.500V10H3.500ZM3.500 12.500H6.500V15H3.500Z", S, G], ["M9 9H18L15 13V18L12 16V13Z", "#fff", K, 1.2]],
  [["M.500 .500H17.500V17.500H.500Z", "#fff", K], ["M.500 .500H17.500V4H.500Z", S, K], ["M.500 8.500H17.500M.500 13H17.500M6 4V17.500M12 4V17.500", "none", G]],
  [["M.500 .500H17.500V17.500H.500Z", "#fff", K], ["M.500 .500H17.500V4H.500Z", S, K], ["M12 4H17.500V17.500H6V13H12Z", L], ["M.500 8.500H17.500M.500 13H17.500M6 4V17.500M12 4V17.500", "none", B]],
  [],
  [],
  [AX, ["M1 3.500H12M1 8.500H9M1 12.500H5", "none", G], ["M1 3.500H12", "none", "#2389cf", 1.2], ["M17 3.500A2 2 0 1 1 13 3.500A2 2 0 1 1 17 3.500Z", L, B], ["M9.500 7.500H11.500V9.500H9.500ZM5.500 11.500H7.500V13.500H5.500Z", S, G]],
  [["M6 9H9M9 3V15H12M9 3H12M9 9H12", "none", K], ["M.500 6.500H6V11H.500ZM12 1H17.500V5H12ZM12 7H17.500V11H12ZM12 13H17.500V17H12Z", L, B]],
  [["M.500 2.500H17.500V12.500H8L4 16.500V12.500H.500Z", "#fff", B, 1.2]],
  [["M3.500 5V.500H11L15.500 5V17.500H3.500V10M11 .500V5H15.500", "#fff", K], ["M5 7A2 2 0 1 1 1 7A2 2 0 1 1 5 7Z", L, B], ["M7 8.500H12M5 12H13", "none", "#2389cf", 1.2]],
  [["M4.500 .500H13.500V7Q12 11 9 11T4.500 7ZM4 3.500H.500Q1 8 5 8M14 3.500H17.500Q17 8 13 8M9 11V15", "#fff", K, 1.2], ["M5 .500H13M5 15.500H13V17.500H5Z", L, B]],
  [["M2 0H12L16 5V18H2Z", "#fff", K, 1.4], ["M11.500 0V5H16", "none", K, 1.2], ["M4.500 12H7V16H4.500ZM8.500 14H10.500V16H8.500ZM12 10H14V16H12Z", K]],
  [["M4 3.500H17.500V15.500H1.500V10M3 13H15", "#fff", K], ["M3 0H8L6 4H8L1 11L2.500 6H0Z", "#fbd26f", O]],
  [["M10.500 1.500H17V8H10.500ZM.500 10.500H7V17H.500ZM10 9", "#fff", G], ["M9 9H18L15 13V18L12 16V13Z", "#fff", K, 1.2], ["M3 0H8L6 4H8L1 11L2.500 6H0Z", "#fbd26f", O]],
  [["M1 1H17.500V17.500H.500V9", "#fff", B, 1.2], ["M7 17Q8 10 12 9Q14 7 14 3L17 1.500V8Q12 9 12 17Z", L, B], ["M5.500 3Q5.500 5 3 9Q.500 5 .500 3A2.500 2.500 0 0 1 5.500 3Z", "#e8700d", O], ["M18 15.500A2.200 2.200 0 1 1 13.500 15.500A2.200 2.200 0 1 1 18 15.500Z", "#e8700d", O]],
  [["M9 .700L17.300 9L9 17.300L.700 9Z", "#fff"], ["M5.500 1.500H12.500L17.300 7V11L12.500 16.500H5.500L.700 11V7ZM5.500 1.500L12.700 9L9 12.700L5.300 9L12.500 1.500M.700 11L5.300 9M17.300 11L12.700 9M5.500 16.500L9 12.700L12.500 16.500", "none", "#8e3ba0", 1.1]],
  [["M.500 1.500H10L17.500 9L10 16.500H.500L8 9ZM3.500 4.500H10.500L15 9M1 16L12 5", "none", "#1c86e0", 1.2]],
];

const vizText: Record<number, [string, number, number, string]> = {
  23: ["123", 2, 9, "#2389cf"],
  29: ["R", 4, 14, "#1f83c6"],
  30: ["Py", 0, 14, "#1f83c6"],
  37: ["123", 2.5, 9, "#2389cf"],
};

function PaneField({ children, box }: { children: ReactNode; box: string }) {
  return <div className={"ml-[4px] flex w-[170px] items-center border border-dashed border-[#c8c6c4] " + box}>{children}</div>;
}

function Visualizations() {
  return (
    <aside className="h-[1197px] w-[181px] border-l border-[#d1d1d1] bg-[#f4f4f4] text-[12px] leading-4 text-[#252423]">
      <div className="flex h-[38px] items-center justify-between pr-[11px] pl-[8px]">
        <Fit w={99} className="text-[15px] font-semibold">Visualizations</Fit>
        <Chevrons />
      </div>
      <div className="h-[15px] pl-[8px] leading-[15px] font-semibold"><Fit w={62}>Build visual</Fit></div>
      <div className="mt-[4px] flex pl-[8px]">
        <div className="flex h-[32px] w-[32px] items-center justify-center bg-white">
          <Ico w={24} h={24} parts={[["M0 .700H19", "none", K, 1.3], ["M.500 5.500H23.500V13H.500ZM.500 16H23.500V23.500H.500Z", "#117865", "#6d6b69"]]} />
        </div>
        <Ico w={24} h={24} className="mt-[4px] ml-[38px]" parts={[["M10 23H.700V.700H10L17 7.500V11M10 .700V7.500H17", "none", "#605e5c", 1.2], ["M6 23Q8 22 8.500 19Q10 16.500 13 18L22 9Q24.500 8.500 23.500 11L15 19.500Q15 24 6 23Z", "#fff", "#605e5c", 1.2]]} />
      </div>
      <svg width="180" height="13" className="block"><path d="M0 12.500H17L24.500 5L32 12.500H180" fill="none" stroke="#d1d1d1" strokeWidth="1.300" /></svg>
      <div className="mt-[11px] ml-[11px] grid w-[168px] grid-cols-6 gap-y-[10px]">
        {vizIcons.map((p, i) => (
          <Ico key={i} parts={p}>
            {vizText[i] && (
              <text x={vizText[i][1] + (i === 37 ? 1.5 : 0)} y={i === 29 || i === 30 ? 15 : 11.5} fontSize={i === 29 || i === 30 ? 16 : 8.500} fontWeight={i === 29 || i === 30 ? 700 : 400} fill={vizText[i][3]} fontFamily={SEG}>{vizText[i][0]}</text>
            )}
          </Ico>
        ))}
      </div>
      <Ico w={10} h={2} className="mt-[16px] ml-[15px]" parts={[["M0 0H2V2H0ZM4 0H6V2H4ZM8 0H10V2H8Z", K]]} />
      <div className="mt-[18px] border-t border-[#d9d9d9] pt-[9px] pl-[12px]"><Fit w={34}>Values</Fit></div>
      <PaneField box="mt-[5px] h-[28px] pl-[10px]"><Fit w={106}>Add data fields here</Fit></PaneField>
      <div className="mt-[11px] pl-[12px] font-semibold"><Fit w={70}>Drill through</Fit></div>
      <div className="mt-[9px] flex h-[16px] items-center pl-[12px]">
        <Fit w={67}>Cross-report</Fit>
        <div className="ml-[47px] flex h-[16px] w-[32px] items-center rounded-full border border-[#605e5c] bg-white pl-[4px] text-[9.500px] text-[#605e5c]">
          <span className="mr-[2px] size-2 rounded-full bg-[#605e5c]" /><Fit w={13}>Off</Fit>
        </div>
      </div>
      <div className="mt-[11px] flex h-[16px] items-center pl-[12px]">
        <Fit w={74}>Keep all filters</Fit>
        <div className="ml-[40px] flex h-[16px] w-[32px] items-center rounded-full bg-[#117865] pl-[5px] text-[9.500px] text-white">
          <Fit w={13}>On</Fit><span className="ml-px size-2 rounded-full bg-white" />
        </div>
      </div>
      <PaneField box="mt-[10px] h-[26px] bg-white pl-[8px]"><Fit w={151}>Add drill-through fields here</Fit></PaneField>
    </aside>
  );
}

const tables: [string, number][] = [["apps", 25], ["apps_categories", 85], ["categories", 54], ["reviews", 39]];

function DataPane() {
  return (
    <aside className="h-[1197px] w-[181px] border-l border-[#d1d1d1] bg-[#f4f4f4] text-[12px] leading-4 text-[#252423]">
      <div className="flex h-[38px] items-center justify-between pr-[11px] pl-[8px]">
        <Fit w={34} className="text-[15px] font-semibold">Data</Fit>
        <Chevrons />
      </div>
      <div className="mt-[7px] ml-[4px] flex h-[24px] w-[172px] items-center rounded border border-b-[#605e5c] border-[#c8c6c4] bg-white pl-[12px] text-[13px] text-[#616161]">
        <Ico w={15} h={14} parts={[["M11 5.500A5 5 0 1 1 1 5.500A5 5 0 1 1 11 5.500ZM9.500 9.500L14 13.500", "none", "#605e5c", 1.1]]} />
        <Fit w={41} className="ml-[7px]">Search</Fit>
      </div>
      <div className="mt-[9px]">
        {tables.map(([t, w]) => (
          <div key={t} className="flex h-[24px] items-center pl-[16px]">
            <Ico w={6} h={8} parts={[["M1 .500L4.500 4L1 7.500", "none", "#605e5c", 1.1]]} />
            <Ico w={12} h={12} className="ml-[7px]" parts={[["M2 .600H10Q11.400 .600 11.400 2V10Q11.400 11.400 10 11.400H2Q.600 11.400 .600 10V2Q.600 .600 2 .600ZM.600 4H11.400M.600 8H11.400M4 .600V11.400M8 .600V11.400", "none", K, 1.1]]} />
            <Fit w={w} className="ml-[6px]">{t}</Fit>
          </div>
        ))}
      </div>
    </aside>
  );
}

function Rail() {
  return (
    <aside className="h-[1197px] w-[41px] bg-[#f4f4f4]">
      <div className="h-[40px] border-l-[3px] border-[#117865] pt-[13px] pl-[11px]">
        <Ico w={14} h={14} parts={[["M.600 0V13.400H14M3 4H5V11.500H3ZM6.500 6H8.500V11.500H6.500ZM10.500 1.500H12.500V11.500H10.500Z", "none", "#252423", 1.2]]} />
      </div>
      <Ico w={16} h={15} className="mt-[12px] ml-[13px]" parts={[["M.600 .600H15.400V14.400H.600ZM.600 3H15.400M.600 6.500H15.400M.600 10.500H15.400M5.500 3V14.400M10.500 3V14.400", "none", K]]} />
      <Ico w={18} h={18} className="mt-[24px] ml-[12px]" parts={[["M.600 5.500H7.500V12.500H.600ZM.600 8.500H7.500M10.500 .600H17.500V7.500H10.500ZM10.500 3.500H17.500M10.500 10.500H17.500V17.400H10.500ZM10.500 13.500H17.500M4.500 5.500V2.500H10.500M4.500 12.500V15.500H10.500", "none", K, 1.1]]} />
      <Ico w={18} h={17} className="mt-[23px] ml-[11px]" parts={[["M4.500 10V1.500Q4.500 .500 5.500 .500H10L15 5V10M10 .500V5H15M17 6V14", "none", K, 1.1]]}>
        <text x="-.500" y="16" fontSize="7" fontWeight="700" fill={K} fontFamily={SEG}>DAX</text>
      </Ico>
    </aside>
  );
}

function PageTabs() {
  return (
    <div className="flex h-[35px] bg-white text-[12px] leading-4 text-[#252423]">
      <div className="flex w-[128px] items-start border-r border-[#9d9b99] pt-[7px] pl-[10px]">
        <div className="flex w-[24px] flex-col items-center">
          <Ico w={16} h={15} parts={[["M3 .700H13Q15 .700 15 3V9Q15 11.500 13 11.500H3Q1 11.500 1 9V3Q1 .700 3 .700ZM5.500 11.500V14M10.500 11.500V14M3 14.300H13", "none", K, 1.3]]} />
          <div className="mt-[6px] h-[3px] w-[24px] rounded bg-[#117865]" />
        </div>
        <Ico w={10} h={17} className="mt-[-1px] ml-[27px]" parts={[["M2 .700H8Q9.300 .700 9.300 2V15Q9.300 16.300 8 16.300H2Q.700 16.300 .700 15V2Q.700 .700 2 .700ZM3 13.500H7", "none", "#4b2a3a", 1.3]]} />
        <Ico w={6} h={9} className="mt-[7px] ml-[22px]" parts={[["M5 .800V8.200L.800 4.500Z", "none", "#8a8886"]]} />
        <Ico w={6} h={9} className="mt-[7px] ml-[15px]" parts={[["M1 .800V8.200L5.200 4.500Z", "none", "#8a8886"]]} />
      </div>
      <div className="flex w-[124px] items-center justify-center border-r border-b-4 border-r-[#c8c6c4] border-b-[#117865] pt-[6px] font-semibold"><Fit w={83}>App Landscape</Fit></div>
      <div className="flex w-[83px] items-center justify-center border-r border-[#c8c6c4] pt-[2px]"><Fit w={41}>Reviews</Fit></div>
      <div className="flex w-[108px] items-center justify-center border-r border-[#c8c6c4] pt-[2px]"><Fit w={67}>App Reviews</Fit></div>
      <div className="flex w-[39px] items-center justify-center bg-[#117865]">
        <Ico w={11} h={11} parts={[["M5.500 0V11M0 5.500H11", "none", "#fff", 2.6]]} />
      </div>
    </div>
  );
}

function StatusBar() {
  return (
    <footer className="flex h-[24px] items-center justify-between border-t border-[#c8c6c4] bg-[#f3f3f3] pr-[19px] pl-[4px] text-[12px] leading-4 text-[#323130]">
      <Fit w={59}>Page 1 of 3</Fit>
      <div className="flex items-center">
        <svg width="121" height="12" viewBox="0 0 121 12" className="block"><path d="M0 5.500H4V7H0ZM8 5.500H108V6.700H8ZM58 3H59.200V9H58ZM66 0H70V12H66ZM115 5.500H121V6.700H115ZM117.400 3H118.600V9.300H117.400Z" fill="#3b3a39" /></svg>
        <Fit w={28} className="ml-[15px]">160%</Fit>
        <Ico w={14} h={10} className="ml-[14px]" parts={[["M.600 .600H13.400V9.400H.600Z", "none", K, 1.2], ["M3 4V3H5M9 3H11V4M3 6V7H5M9 7H11V6", "none", K]]} />
      </div>
    </footer>
  );
}

/* ---------- taskbar ---------- */

function TaskApp({ children, mark }: { children: ReactNode; mark?: ReactNode }) {
  return (
    <div className="flex h-[40px] w-[44px] flex-col items-center">
      <div className="mt-[8px] flex size-[24px] items-center justify-center">{children}</div>
      <div className="mt-[4px] flex">{mark}</div>
    </div>
  );
}

function Taskbar() {
  const dot = <span className="h-[3px] w-[6px] rounded bg-[#868686]" />;
  return (
    <footer className="relative flex h-[49px] border-t border-[#a9b3ad] bg-[linear-gradient(90deg,#d5edb9_0%,#d2e9c6_8%,#dfeca9_18%,#e9ee9f_25%,#ecea9f_31%,#f5e8b9_38%,#f8e8d0_44%,#fbe9da_52%,#eef0ef_60%,#e6f1f2_65%,#c3f4f0_75%,#c5f3ef_79%,#d0eaee_84%,#cee6ec_92%,#c9e7ec_100%)] text-[#202020]">
      <div className="absolute -top-px right-0 h-px w-[750px] bg-black" />
      <div className="w-[1421px] shrink-0" />
      <div className="flex shrink-0 pt-[4px]">
        <div className="mt-[9px] grid size-[23px] grid-cols-2 gap-px">
          <span className="bg-[linear-gradient(135deg,#4cc3f5,#1e9be6)]" /><span className="bg-[linear-gradient(135deg,#3cb4f0,#1590e0)]" />
          <span className="bg-[linear-gradient(135deg,#2ba5ea,#0c7bd6)]" /><span className="bg-[linear-gradient(135deg,#1c93e2,#0668c8)]" />
        </div>
        <div className="mt-[5px] ml-[14px] flex h-[31px] w-[218px] items-center rounded-full border border-[#dfd2bd] bg-[#fcf6ee] pl-[10px] text-[13px] text-[#5d5a57]">
          <Ico w={16} h={16} parts={[["M12.500 6.500A5.500 5.500 0 1 1 1.500 6.500A5.500 5.500 0 1 1 12.500 6.500ZM11 10.500L15 15", "none", "#252423", 1.8]]} />
          <Fit w={42} className="ml-[9px]">Search</Fit>
          <Ico w={42} h={22} className="ml-[91px]" parts={[["M2 9L18 9V20L3 21Z", "#6b4a92"], ["M0 5L16 0L17 3.500L1.500 8.500Z", "#4a3568"], ["M4 4L7 7M9 2.500L12 5.500M3 9L6 12M9 9L12 12", "none", "#efe6f8", 1.7], ["M7 14L13 17L7 19Z", "#e9dcf6"], ["M27 3L41 5L39 20L25 18Z", "#efe6f8", "#8b6bb0"], ["M30 7L38 8M29 10L38 11M34 14L37 14.400M33 17L37 17.500", "none", "#8b6bb0", 1.2], ["M29 10L30.500 13L33.500 13.500L31 15.500L31.500 18.500L29 17L26 18L27 15L25 13L28 13Z", "#f5b21c"]]} />
        </div>
        <div className="ml-[3px] flex">
          <TaskApp><Ico w={24} h={24} parts={[["M1 7H18V23H1Z", "#2c2c2c"], ["M7 1H24V17H7Z", "#f4f2f0"], ["M7 7H18V17H7Z", "#c4c2c0"]]} /></TaskApp>
          <div className="flex h-[39px] w-[44px] flex-col items-center">
            <div className="flex h-[39px] w-[38px] flex-col items-center rounded border border-[#efe2d4] bg-[#fdf6ef]">
              <Ico w={24} h={24} className="mt-[7px]" parts={[["M0 0H24V24H0Z", "#0f7bd0"], ["M12 0H21V24H12Z", "#e0a010"], ["M16 0H21V24H16Z", "#c07c08"], ["M8 6H16V24H8Z", "#f3c62c"], ["M2 12H10V24H2Z", "#f8dd6a"]]} />
              <span className="mt-[3px] h-[3px] w-[16px] rounded bg-[#0a74d0]" />
            </div>
          </div>
          <TaskApp><Ico w={24} h={22} parts={[["M0 2Q0 1 1 1H9L11 4H0Z", "#e09a10"], ["M0 4H11L13 3H23Q24 3 24 4V21Q24 22 23 22H1Q0 22 0 21Z", "#fbcb45"], ["M4 22V17Q4 15 6 15H18Q20 15 20 17V22Z", "#1a7fd0"], ["M8 19H16V22H8Z", "#0f5ea8"]]} /></TaskApp>
          <TaskApp><Ico w={23} h={24} parts={[["M6 6V2.500Q6 1 7.500 1H15.500Q17 1 17 2.500V6", "none", "#38b6f0", 1.8], ["M0 6H23V21Q23 24 20 24H3Q0 24 0 21Z", "#15508c"], ["M7 10H11V14H7Z", "#f25022"], ["M12 10H16V14H12Z", "#7fba00"], ["M7 15H11V19H7Z", "#00a4ef"], ["M12 15H16V19H12Z", "#ffb900"]]} /></TaskApp>
          <TaskApp>
            <Ico w={24} h={24} parts={[["M4 7L14 1L24 7V22Q24 23 23 23H6Q4 23 4 22Z", "#28a8ea"], ["M10 4L14 1L24 7L14 15Z", "#1066b5"], ["M24 8V22L10 23Z", "#4fd8f8"], ["M0 5H14V19H0Z", "#0f5fb8"]]}>
              <circle cx="7" cy="12" r="3.500" fill="none" stroke="#fff" strokeWidth="1.800" />
            </Ico>
          </TaskApp>
          <TaskApp mark={dot}>
            <Ico w={24} h={24} parts={[["M12 12L1.600 6A12 12 0 0 1 22.400 6Z", "#e33b2e"], ["M12 12L22.400 6A12 12 0 0 1 12 24Z", "#fbc116"], ["M12 12V24A12 12 0 0 1 1.600 6Z", "#27a04b"], ["M12 6H22.400A12 12 0 0 0 1.600 6L6 13Z", "#e33b2e"]]}>
              <circle cx="12" cy="12" r="5.600" fill="#fff" /><circle cx="12" cy="12" r="4.400" fill="#3b7ded" />
            </Ico>
          </TaskApp>
          <TaskApp mark={dot}>
            <svg width="22" height="22" viewBox="0 0 22 22" className="block">
              <defs><linearGradient id="cc" x1="0" y1="0" x2="1" y2="1"><stop offset="0" stopColor="#e8202c" /><stop offset=".3" stopColor="#f5188c" /><stop offset=".55" stopColor="#8a48d8" /><stop offset=".75" stopColor="#2a9ff0" /><stop offset="1" stopColor="#3fd05a" /></linearGradient></defs>
              <rect width="22" height="22" rx="3.500" fill="url(#cc)" /><path d="M0 9V18.500Q0 22 3.500 22H16Z" fill="#f8c020" />
              <path d="M8 15.500A4.500 4.500 0 1 1 12 8.500L15 12M13 15.500H14.500A4 4 0 1 0 10.500 10M8 15.500H13L9 11.500" fill="none" stroke="#fff" strokeWidth="1.600" />
            </svg>
          </TaskApp>
          <TaskApp mark={<span className="flex h-[3px] w-[24px] items-center"><span className="h-[3px] w-[6px] rounded bg-[#0a64c0]" /><span className="h-px flex-1 bg-[#868686]" /></span>}>
            <svg width="24" height="24" viewBox="0 0 24 24" className="block">
              <defs><radialGradient id="ea" cx=".5" cy=".3" r=".7"><stop offset="0" stopColor="#ff6a20" /><stop offset="1" stopColor="#d83408" /></radialGradient></defs>
              <circle cx="12" cy="12" r="12" fill="url(#ea)" />
              <path d="M6.500 8.500H12.500M5.500 12H11M11.500 16H4.500M11 16L15 8.500L19.500 16M13.500 14H17" fill="none" stroke="#1c0d08" strokeWidth="1.900" />
            </svg>
          </TaskApp>
        </div>
      </div>
      <div className="flex flex-1 items-center justify-end pr-[19px] text-[12px] leading-4">
        <Ico w={10} h={6} className="mr-[19px]" parts={[["M.500 5.500L5 1L9.500 5.500", "none", "#202020", 1.4]]} />
        <Ico w={16} h={12} className="mr-[8px]" parts={[["M.700 4.500Q8 -2.500 15.300 4.500M3 7Q8 2 13 7M5.300 9.300Q8 6.500 10.700 9.300", "none", "#202020", 1.2], ["M9.500 11A1.500 1.500 0 1 1 6.500 11A1.500 1.500 0 1 1 9.500 11Z", "#202020"]]} />
        <Ico w={16} h={14} className="mr-[16px]" parts={[["M.600 5H3L7 1V13L3 9.500H.600ZM9.500 5Q11 7 9.500 9.500M11.500 3Q14 7 11.500 11.500M13.500 1Q17 7 13.500 13.500", "none", "#202020", 1.1]]} />
        <div className="flex flex-col items-end"><Fit w={43}>5:22 PM</Fit><Fit w={49}>3/1/2025</Fit></div>
      </div>
    </footer>
  );
}

export default function App() {
  return (
    <div className="h-[1440px] w-[3440px] overflow-hidden bg-[#f4f4f4] font-['Open_Sans','Noto_Sans',sans-serif]">
      <Header />
      <div className="flex h-[1197px]">
        <Rail />
        <div className="w-[3037px]">
          <div className="flex">
            <Canvas />
            <Filters />
          </div>
          <PageTabs />
        </div>
        <Visualizations />
        <DataPane />
      </div>
      <StatusBar />
      <Taskbar />
    </div>
  );
}
